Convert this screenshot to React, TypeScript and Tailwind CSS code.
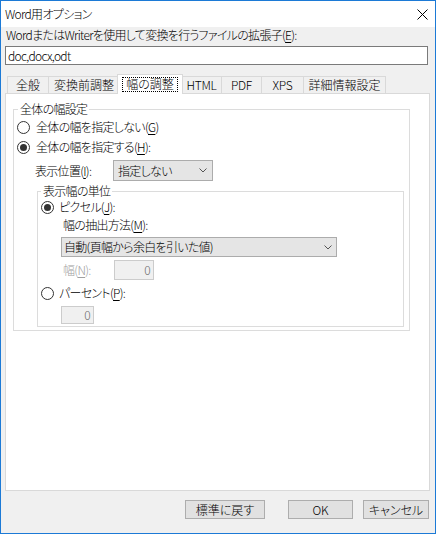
import React from "react";

function U({ children }: { children: React.ReactNode }) {
  return <span className="underline underline-offset-[2px] decoration-1">{children}</span>;
}

function Radio({ checked }: { checked?: boolean }) {
  return (
    <span className="w-[13px] h-[13px] rounded-full border border-[#333333] bg-white flex items-center justify-center shrink-0">
      {checked && <span className="w-[7px] h-[7px] rounded-full bg-[#333333]" />}
    </span>
  );
}

function Chevron() {
  return (
    <svg width="8" height="5" viewBox="0 0 8 5" className="shrink-0">
      <path d="M0.5 0.5 L4 4 L7.5 0.5" fill="none" stroke="#555555" strokeWidth="1" />
    </svg>
  );
}

function Tab({ w, children, last }: { w: string; children: React.ReactNode; last?: boolean }) {
  return (
    <div
      className={`${w} h-[17px] border-t border-l border-[#d9d9d9] ${last ? "border-r" : ""} bg-[#f0f0f0] flex items-center justify-center whitespace-nowrap`}
    >
      {children}
    </div>
  );
}

export default function App() {
  return (
    <div
      className={
        'w-[436px] h-[534px] border border-[#1c7ad6] bg-[#f0f0f0] flex flex-col text-[12px] leading-[16px] text-black font-light tracking-[-0.7px] font-["Noto_Sans_CJK_JP",sans-serif] [font-feature-settings:"palt"_1]'
      }
    >
      {/* title bar */}
      <div className="h-[26px] bg-white flex items-center justify-between pl-[4px] pr-[7px] shrink-0">
        <span>Word用オプション</span>
        <svg width="11" height="11" viewBox="0 0 11 11">
          <path d="M0.5 0.5 L10.5 10.5 M10.5 0.5 L0.5 10.5" stroke="#000000" strokeWidth="1" fill="none" />
        </svg>
      </div>

      <div className="flex flex-col pl-[4px]">
        <div className="h-[16px] pl-[1px] whitespace-nowrap">
          WordまたはWriterを使用して変換を行うファイルの拡張子(<U>E</U>):
        </div>
        <div className="mt-[3px] w-[423px] h-[19px] border border-[#7a7a7a] bg-white pl-[2px] flex items-center">
          doc,docx,odt
        </div>

        {/* tabs */}
        <div className="mt-[9px] h-[19px] flex items-end pl-[2px] tracking-normal">
          <Tab w="w-[41px]">全般</Tab>
          <Tab w="w-[71px]">変換前調整</Tab>
          <div className="relative z-10 ml-[-2px] mr-[-2px] mb-[-1px] w-[66px] h-[20px] border-t border-l border-r border-[#d9d9d9] bg-white flex items-center justify-center pb-[1px]">
            <span className="border border-dotted border-black px-[3px] h-[15px] flex items-center justify-center whitespace-nowrap">
              幅の調整
            </span>
          </div>
          <Tab w="w-[40px]">
            <span className="tracking-[-0.3px]">HTML</span>
          </Tab>
          <Tab w="w-[40px]">
            <span className="tracking-[-0.3px]">PDF</span>
          </Tab>
          <Tab w="w-[42px]">
            <span className="tracking-[-0.3px]">XPS</span>
          </Tab>
          <Tab w="w-[83px]" last>
            詳細情報設定
          </Tab>
        </div>

        {/* panel */}
        <div className="w-[425px] h-[398px] border border-[#d9d9d9] bg-white flex flex-col">
          <fieldset className="mt-[7px] ml-[7px] w-[397px] border border-[#dcdcdc] p-0 m-0 min-w-0">
            <legend className="ml-[4px] px-[2px] h-[16px] leading-[16px]">全体の幅設定</legend>

            <div className="h-[20px] flex items-center ml-[3px] gap-[6px]">
              <Radio />
              <span>
                全体の幅を指定しない(<U>G</U>)
              </span>
            </div>
            <div className="h-[20px] flex items-center ml-[3px] gap-[6px]">
              <Radio checked />
              <span>
                全体の幅を指定する(<U>H</U>):
              </span>
            </div>
            <div className="mt-[3px] h-[21px] flex items-center">
              <span className="ml-[21px] w-[78px]">
                表示位置(<U>I</U>):
              </span>
              <div className="w-[100px] h-[21px] border border-[#acacac] bg-[#e5e5e5] flex items-center justify-between pl-[4px] pr-[5px]">
                <span>指定しない</span>
                <Chevron />
              </div>
            </div>

            <fieldset className="mt-[2px] ml-[23px] mb-[3px] w-[367px] border border-[#dcdcdc] p-0 pb-[2px] min-w-0">
              <legend className="ml-[3px] px-[2px] h-[16px] leading-[16px]">表示幅の単位</legend>

              <div className="h-[16px] flex items-center ml-[3px] gap-[5px]">
                <Radio checked />
                <span>
                  ピクセル(<U>J</U>):
                </span>
              </div>
              <div className="mt-[2px] h-[16px] flex items-center ml-[25px]">
                <span>
                  幅の抽出方法(<U>M</U>):
                </span>
              </div>
              <div className="mt-[4px] ml-[23px] w-[276px] h-[20px] border border-[#acacac] bg-[#e5e5e5] flex items-center justify-between pl-[2px] pr-[4px]">
                <span>自動(頁幅から余白を引いた値)</span>
                <Chevron />
              </div>
              <div className="mt-[3px] h-[20px] flex items-center">
                <span className="ml-[25px] w-[51px] text-[#a0a0a0]">
                  幅(<U>N</U>):
                </span>
                <div className="w-[40px] h-[20px] border border-[#cccccc] bg-[#f0f0f0] flex items-center justify-end pr-[3px] text-[#6d6d6d]">
                  0
                </div>
              </div>
              <div className="mt-[5px] h-[16px] flex items-center ml-[3px] gap-[5px]">
                <Radio />
                <span>
                  パーセント(<U>P</U>):
                </span>
              </div>
              <div className="mt-[5px] ml-[23px] w-[33px] h-[18px] border border-[#cccccc] bg-[#f0f0f0] flex items-center justify-end pr-[3px] text-[#6d6d6d]">
                0
              </div>
            </fieldset>
          </fieldset>
        </div>

        {/* buttons */}
        <div className="mt-[9px] flex justify-end pr-[6px] tracking-normal">
          <div className="w-[80px] h-[19px] border border-[#adadad] bg-[#e1e1e1] flex items-center justify-center">
            標準に戻す
          </div>
          <div className="ml-[23px] w-[65px] h-[19px] border border-[#adadad] bg-[#e1e1e1] flex items-center justify-center">
            OK
          </div>
          <div className="ml-[10px] w-[66px] h-[19px] border border-[#adadad] bg-[#e1e1e1] flex items-center justify-center">
            キャンセル
          </div>
        </div>
      </div>
    </div>
  );
}
